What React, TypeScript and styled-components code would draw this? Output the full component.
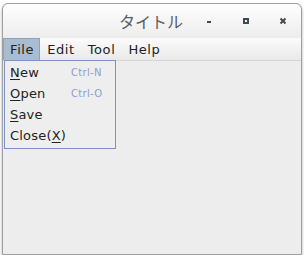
import styled, { createGlobalStyle } from "styled-components"

const Global = createGlobalStyle`
    body {
        margin: 0;
        background: #ffffff;
        font-family: "DejaVu Sans", "Noto Sans CJK JP", sans-serif;
    }
`

const Frame = styled.div`
    position: relative;
    width: 298px;
    height: 250px;
    margin: 3px 0 0 2px;
    border: 1px solid #a0a0a0;
    border-radius: 6px 6px 0 0;
    background: #ededed;
    box-shadow: 0 2px 3px rgba(0, 0, 0, 0.35);
    display: flex;
    flex-direction: column;
`

const TitleBar = styled.div`
    height: 34px;
    display: flex;
    align-items: center;
    border-radius: 6px 6px 0 0;
    background: linear-gradient(#fefefe, #ededed);
    position: relative;
`

const Title = styled.div`
    position: absolute;
    left: 0;
    right: 0;
    text-align: center;
    font-family: "Noto Sans CJK JP", sans-serif;
    font-size: 16px;
    color: #5a5f63;
    padding-right: 2px;
`

const Controls = styled.div`
    margin-left: auto;
    display: flex;
    align-items: center;
    padding-right: 0;
    z-index: 1;
`

const CtrlButton = styled.div`
    width: 37px;
    height: 20px;
    display: flex;
    align-items: center;
    justify-content: center;
`

const MenuBar = styled.div`
    height: 22px;
    display: flex;
    align-items: stretch;
    background: linear-gradient(#fbfbfb, #e9e9e9);
    border-bottom: 1px solid #d6d6d6;
`

const MenuTitle = styled.div<{ $active?: boolean }>`
    display: flex;
    align-items: center;
    padding: 0 5px 0 6px;
    font-size: 13px;
    letter-spacing: 0.6px;
    color: #222;
    background: ${p => (p.$active ? "#a9bdd2" : "transparent")};
    border: 1px solid ${p => (p.$active ? "#8ea3bb" : "transparent")};
    border-bottom: none;
`

const Dropdown = styled.ul`
    position: absolute;
    left: 1px;
    top: 56px;
    width: 110px;
    height: 86px;
    margin: 0;
    padding: 1px 0 0;
    list-style: none;
    background: #eeeeee;
    border: 1px solid #7d92c4;
    z-index: 5;
`

const Item = styled.li`
    height: 21px;
    display: flex;
    align-items: center;
    padding-left: 5px;
    font-size: 13px;
    letter-spacing: 0.2px;
    color: #222;
`

const Label = styled.span`
    width: 61px;
    u {
        text-decoration-thickness: 1px;
        text-underline-offset: 2px;
    }
`

const Shortcut = styled.span`
    font-size: 10px;
    color: #8a9fcb;
    letter-spacing: 0.3px;
`

const Body = styled.div`
    flex: 1;
    background: #ededed;
`

const items = [
    { key: "N", rest: "ew", shortcut: "Ctrl-N" },
    { key: "O", rest: "pen", shortcut: "Ctrl-O" },
    { key: "S", rest: "ave" },
]

export default function App() {
    return (
        <>
            <Global />
            <Frame>
                <TitleBar>
                    <Title>タイトル</Title>
                    <Controls>
                        <CtrlButton>
                            <svg width="6" height="6" viewBox="0 0 6 6">
                                <rect x="1" y="3" width="4" height="2" fill="#3f4a52" />
                            </svg>
                        </CtrlButton>
                        <CtrlButton>
                            <svg width="8" height="8" viewBox="0 0 8 8">
                                <rect x="1" y="1" width="6" height="6" fill="#3f4a52" />
                                <rect x="3" y="3" width="2" height="2" fill="#f4f4f4" />
                            </svg>
                        </CtrlButton>
                        <CtrlButton>
                            <svg width="8" height="8" viewBox="0 0 8 8">
                                <path d="M1.5 1.5 L6.5 6.5 M6.5 1.5 L1.5 6.5" stroke="#3f4a52" strokeWidth="2" />
                            </svg>
                        </CtrlButton>
                    </Controls>
                </TitleBar>
                <MenuBar>
                    <MenuTitle $active>File</MenuTitle>
                    <MenuTitle>Edit</MenuTitle>
                    <MenuTitle>Tool</MenuTitle>
                    <MenuTitle>Help</MenuTitle>
                </MenuBar>
                <Body />
                <Dropdown>
                    {items.map(it => (
                        <Item key={it.key}>
                            <Label><u>{it.key}</u>{it.rest}</Label>
                            {it.shortcut && <Shortcut>{it.shortcut}</Shortcut>}
                        </Item>
                    ))}
                    <Item>
                        <Label>Close(<u>X</u>)</Label>
                    </Item>
                </Dropdown>
            </Frame>
        </>
    )
}
